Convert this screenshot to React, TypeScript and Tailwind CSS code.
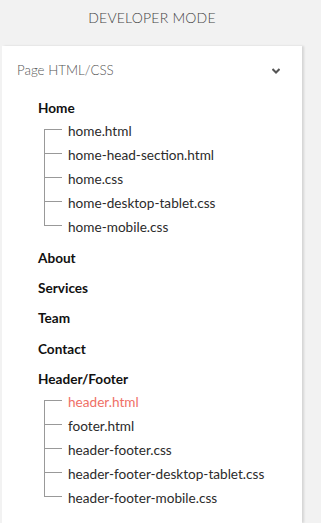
const homeFiles = [
  "home.html",
  "home-head-section.html",
  "home.css",
  "home-desktop-tablet.css",
  "home-mobile.css",
];

const headerFooterFiles = [
  "header.html",
  "footer.html",
  "header-footer.css",
  "header-footer-desktop-tablet.css",
  "header-footer-mobile.css",
];

function FileTree({ files, active }: { files: string[]; active?: string }) {
  return (
    <ul className="relative ml-[6px]">
      {/* vertical guide */}
      <div className="absolute left-0 top-[10px] bottom-[14px] w-px bg-[#999]" />
      {files.map((f) => (
        <li key={f} className="relative h-[24px] pl-[24px] leading-[24px]">
          <span className="absolute left-0 top-[10px] h-px w-[18px] bg-[#999]" />
          <span className={f === active ? "text-[#ef6f66]" : "text-[#2b2b2b]"}>{f}</span>
        </li>
      ))}
    </ul>
  );
}

function Heading({ children, className = "" }: { children: string; className?: string }) {
  return (
    <div className={"h-[22px] leading-[22px] font-bold text-[#111] " + className}>{children}</div>
  );
}

export default function App() {
  return (
    <div className="min-h-[523px] w-[321px] bg-[#f2f2f2] font-['Lato','Open_Sans',sans-serif] text-[13.6px]">
      <div className="flex h-[34px] w-[304px] items-center justify-center text-[14px] font-light text-[#444] tracking-[0.2px]">
        DEVELOPER MODE
      </div>
      <div className="ml-[2px] mt-[12px] min-h-[477px] w-[300px] bg-white shadow-[2px_0_2px_rgba(0,0,0,0.12)]">
        <div className="flex h-[50px] items-center justify-between pl-[15px] pr-[22px]">
          <span className="text-[13.3px] font-light text-[#555]">Page HTML/CSS</span>
          <svg width="8" height="6" viewBox="0 0 8 6">
            <path d="M0.5 1 L4 4.5 L7.5 1" fill="none" stroke="#555" strokeWidth="2" />
          </svg>
        </div>
        <div className="pl-[36px]">
          <Heading className="mt-[1px]">Home</Heading>
          <FileTree files={homeFiles} />
          <Heading className="mt-[8px]">About</Heading>
          <Heading className="mt-[8px]">Services</Heading>
          <Heading className="mt-[8px]">Team</Heading>
          <Heading className="mt-[9px]">Contact</Heading>
          <Heading className="mt-[8px]">Header/Footer</Heading>
          <FileTree files={headerFooterFiles} active="header.html" />
        </div>
      </div>
    </div>
  );
}
